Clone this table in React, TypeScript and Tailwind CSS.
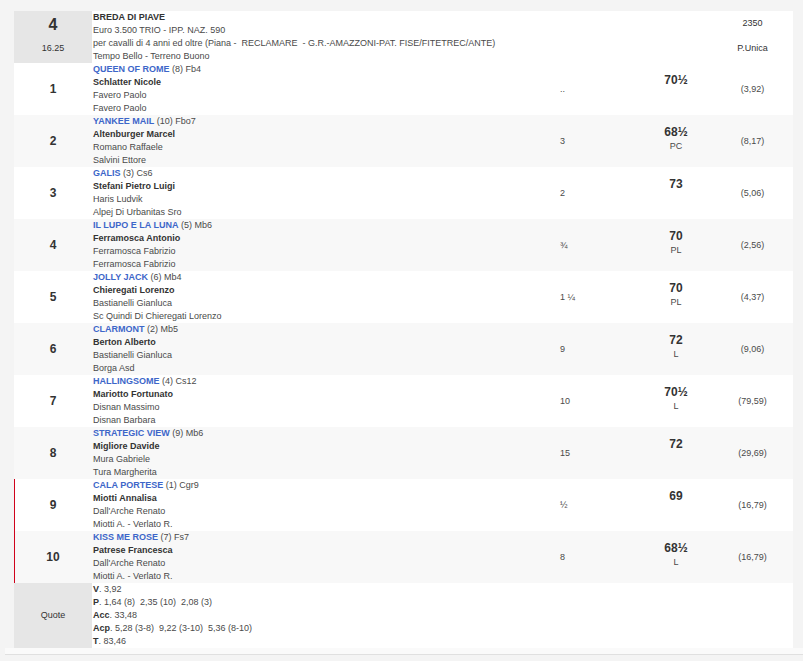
import React from 'react';

type Runner = {
  pos: string;
  horse: string;
  extra: string;
  jockey: string;
  trainer: string;
  owner: string;
  dist: string;
  weight: string;
  note: string;
  odds: string;
  flagged?: boolean;
};

const runners: Runner[] = [
  { pos: '1', horse: 'QUEEN OF ROME', extra: '(8) Fb4', jockey: 'Schlatter Nicole', trainer: 'Favero Paolo', owner: 'Favero Paolo', dist: '..', weight: '70½', note: '', odds: '(3,92)' },
  { pos: '2', horse: 'YANKEE MAIL', extra: '(10) Fbo7', jockey: 'Altenburger Marcel', trainer: 'Romano Raffaele', owner: 'Salvini Ettore', dist: '3', weight: '68½', note: 'PC', odds: '(8,17)' },
  { pos: '3', horse: 'GALIS', extra: '(3) Cs6', jockey: 'Stefani Pietro Luigi', trainer: 'Haris Ludvik', owner: 'Alpej Di Urbanitas Sro', dist: '2', weight: '73', note: '', odds: '(5,06)' },
  { pos: '4', horse: 'IL LUPO E LA LUNA', extra: '(5) Mb6', jockey: 'Ferramosca Antonio', trainer: 'Ferramosca Fabrizio', owner: 'Ferramosca Fabrizio', dist: '¾', weight: '70', note: 'PL', odds: '(2,56)' },
  { pos: '5', horse: 'JOLLY JACK', extra: '(6) Mb4', jockey: 'Chieregati Lorenzo', trainer: 'Bastianelli Gianluca', owner: 'Sc Quindi Di Chieregati Lorenzo', dist: '1 ¼', weight: '70', note: 'PL', odds: '(4,37)' },
  { pos: '6', horse: 'CLARMONT', extra: '(2) Mb5', jockey: 'Berton Alberto', trainer: 'Bastianelli Gianluca', owner: 'Borga Asd', dist: '9', weight: '72', note: 'L', odds: '(9,06)' },
  { pos: '7', horse: 'HALLINGSOME', extra: '(4) Cs12', jockey: 'Mariotto Fortunato', trainer: 'Disnan Massimo', owner: 'Disnan Barbara', dist: '10', weight: '70½', note: 'L', odds: '(79,59)' },
  { pos: '8', horse: 'STRATEGIC VIEW', extra: '(9) Mb6', jockey: 'Migliore Davide', trainer: 'Mura Gabriele', owner: 'Tura Margherita', dist: '15', weight: '72', note: '', odds: '(29,69)' },
  { pos: '9', horse: 'CALA PORTESE', extra: '(1) Cgr9', jockey: 'Miotti Annalisa', trainer: "Dall'Arche Renato", owner: 'Miotti A. - Verlato R.', dist: '½', weight: '69', note: '', odds: '(16,79)', flagged: true },
  { pos: '10', horse: 'KISS ME ROSE', extra: '(7) Fs7', jockey: 'Patrese Francesca', trainer: "Dall'Arche Renato", owner: 'Miotti A. - Verlato R.', dist: '8', weight: '68½', note: 'L', odds: '(16,79)', flagged: true },
];

const grid = 'grid grid-cols-[78px_463px_85px_72px_81px]';

export default function App() {
  return (
    <div
      className="min-h-screen bg-[#f4f4f4] pt-[11px] text-[9px] leading-[13px] text-[#4a4a4a]"
      style={{ fontFamily: '"Liberation Sans", Arial, sans-serif' }}>
      <div className="ml-[14px] w-[779px]">
        {/* race header */}
        <div className={`${grid} h-[52px] bg-white`}>
          <div className="flex flex-col items-center bg-[#e6e6e6] pt-[5px] text-[#333]">
            <div className="text-[16px] font-bold leading-[18px]">4</div>
            <div className="mt-[8px]">16.25</div>
          </div>
          <div className="col-span-3 pl-px">
            <div className="font-bold text-[#333]">BREDA DI PIAVE</div>
            <div>Euro 3.500 TRIO - IPP. NAZ. 590</div>
            <div className="whitespace-pre">per cavalli di 4 anni ed oltre (Piana -  RECLAMARE  - G.R.-AMAZZONI-PAT. FISE/FITETREC/ANTE)</div>
            <div>Tempo Bello - Terreno Buono</div>
          </div>
          <div className="flex flex-col items-center pt-[6px] text-[#333]">
            <div>2350</div>
            <div className="mt-[12px]">P.Unica</div>
          </div>
        </div>

        {runners.map((r, i) =>
        <div
          key={r.pos}
          className={`${grid} h-[52px] ${i % 2 === 0 ? 'bg-white' : 'bg-[#f8f8f8]'} ${r.flagged ? 'shadow-[inset_1px_0_0_#d0021b]' : ''}`}>
            <div className="flex items-center justify-center text-[12px] font-bold text-[#333]">{r.pos}</div>
            <div className="pl-px">
              <div>
                <span className="font-bold text-[#3d66c9]">{r.horse}</span> {r.extra}
              </div>
              <div className="font-bold text-[#333]">{r.jockey}</div>
              <div>{r.trainer}</div>
              <div>{r.owner}</div>
            </div>
            <div className="flex items-center pl-[5px]">{r.dist}</div>
            <div className="flex flex-col items-center justify-center pb-[4px]">
              <div className="text-[12px] font-bold leading-[15px] text-[#333]">{r.weight}</div>
              <div className="h-[13px]">{r.note}</div>
            </div>
            <div className="flex items-center justify-center">{r.odds}</div>
          </div>
        )}

        {/* quote */}
        <div className={`${grid} bg-white`}>
          <div className="flex items-center justify-center bg-[#e6e6e6] text-[#333]">Quote</div>
          <div className="col-span-4 pl-px">
            <div><b className="text-[#333]">V</b>. 3,92</div>
            <div className="whitespace-pre"><b className="text-[#333]">P</b>. 1,64 (8)  2,35 (10)  2,08 (3)</div>
            <div><b className="text-[#333]">Acc</b>. 33,48</div>
            <div className="whitespace-pre"><b className="text-[#333]">Acp</b>. 5,28 (3-8)  9,22 (3-10)  5,36 (8-10)</div>
            <div><b className="text-[#333]">T</b>. 83,46</div>
          </div>
        </div>
      </div>
      <div className="ml-[5px] h-[7px] border-b border-[#e0e0e0] bg-[#fafafa]" />
    </div>);

}
